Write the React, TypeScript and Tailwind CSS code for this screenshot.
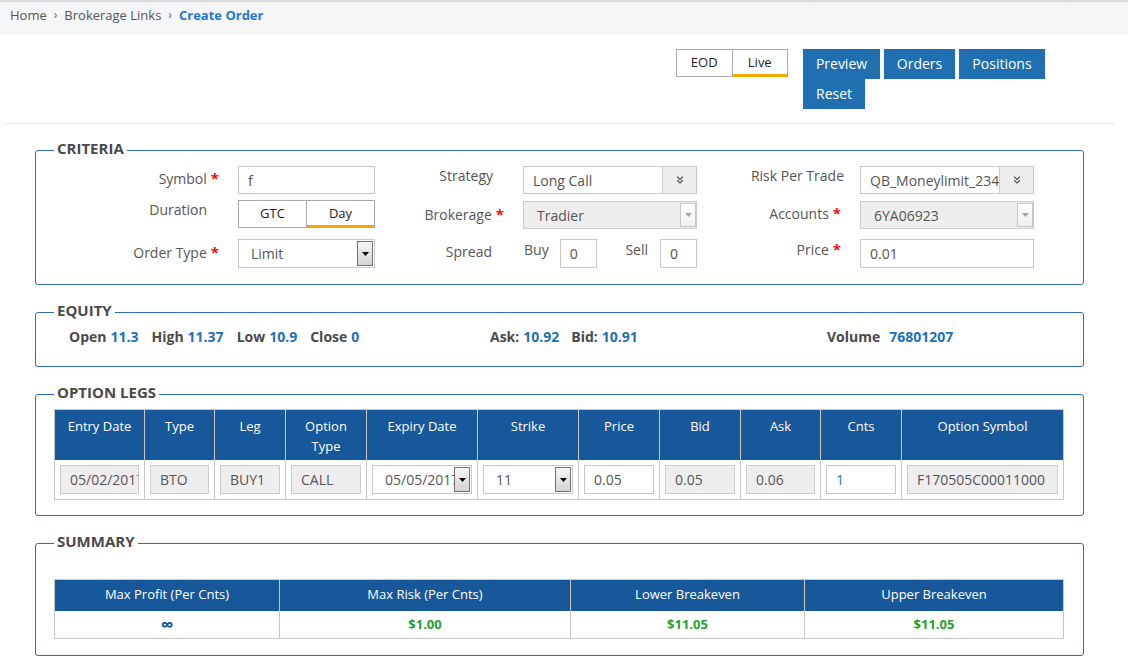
import { ChevronsDown } from "lucide-react";
import clsx from "clsx";
import type { ReactNode } from "react";

const ticks = [45, 44, 58, 59, 59, 62, 59, 61, 69, 235, 60, 53, 60, 143];

function Caret({ color = "#000" }: { color?: string }) {
  return (
    <svg width="7" height="4" viewBox="0 0 7 4">
      <path d="M0 0h7L3.5 4z" fill={color} />
    </svg>
  );
}

function Req() {
  return <span className="ml-[4px] text-[15px] font-bold text-[#e8140c]">*</span>;
}

function Label({ children, req, className }: { children: ReactNode; req?: boolean; className?: string }) {
  return (
    <div className={clsx("text-right text-[14px] leading-[20px] text-[#555]", className)}>
      {children}
      {req && <Req />}
    </div>
  );
}

function Box({
  value,
  disabled,
  className,
  textClass = "text-[#555]",
}: {
  value: string;
  disabled?: boolean;
  className?: string;
  textClass?: string;
}) {
  return (
    <div
      className={clsx(
        "flex items-center overflow-hidden whitespace-nowrap border pl-[9px] text-[14px]",
        disabled ? "border-[#ccc] bg-[#eee]" : "border-[#c8c8c8] bg-white",
        textClass,
        className,
      )}
    >
      {value}
    </div>
  );
}

function ChevSelect({ value }: { value: string }) {
  return (
    <div className="flex h-[28px] w-[174px] border border-[#c8c8c8] bg-white text-[14px] text-[#555]">
      <div className="flex min-w-0 flex-1 items-center overflow-hidden whitespace-nowrap pl-[9px]">{value}</div>
      <div className="flex w-[34px] shrink-0 items-center justify-center border-l border-[#ccc] bg-[#eee]">
        <ChevronsDown size={12} strokeWidth={2.25} className="text-[#555]" />
      </div>
    </div>
  );
}

function DisSelect({ value }: { value: string }) {
  return (
    <div className="mt-px flex h-[28px] w-[174px] border border-[#ccc] bg-[#eee] text-[14px] text-[#555]">
      <div className="flex flex-1 items-center pl-[13px]">{value}</div>
      <div className="my-px flex w-[16px] items-center justify-center border border-[#c6c6c6] bg-linear-to-b from-white to-[#f0f0f0]">
        <Caret color="#a5a5a5" />
      </div>
    </div>
  );
}

function ClassicSelect({ value, className }: { value: string; className?: string }) {
  return (
    <div className={clsx("flex border border-[#c8c8c8] bg-white text-[14px] text-[#555]", className)}>
      <div className="flex min-w-0 flex-1 items-center overflow-hidden whitespace-nowrap pl-[12px]">{value}</div>
      <div className="my-px mr-px flex w-[16px] shrink-0 items-center justify-center border border-[#707070] bg-linear-to-b from-[#f6f6f6] to-[#d4d4d4]">
        <Caret />
      </div>
    </div>
  );
}

function Toggle({ left, right, className }: { left: string; right: string; className?: string }) {
  return (
    <div className={clsx("flex h-[28px] border-x border-t border-[#aaa] text-[13px] text-[#222]", className)}>
      <div className="flex flex-1 items-center justify-center border-r border-b border-[#aaa]">{left}</div>
      <div className="flex flex-1 items-center justify-center border-b-[3px] border-[#f5a800] pt-[2px]">{right}</div>
    </div>
  );
}

function Section({ title, className, children }: { title: string; className?: string; children: ReactNode }) {
  return (
    <fieldset className={clsx("ml-[35px] w-[1049px] rounded-[3px] border border-[#2e6db4]", className)}>
      <legend className="ml-[18px] px-[3px] pb-[4px] text-[15px] font-bold leading-[20px] text-[#4a4a4a]">{title}</legend>
      {children}
    </fieldset>
  );
}

function Stat({ label, value, gap = "" }: { label: string; value: string; gap?: string }) {
  return (
    <span className="text-[#4a4a4a]">
      {label}
      <span className={clsx("text-[#2071b6]", gap || "ml-[4px]")}>{value}</span>
    </span>
  );
}

const legCols = "grid-cols-[90px_70px_71px_81px_111px_101px_81px_81px_80px_81px_162px]";
const legHeads: ReactNode[] = [
  "Entry Date",
  "Type",
  "Leg",
  <>
    Option
    <br />
    Type
  </>,
  "Expiry Date",
  "Strike",
  "Price",
  "Bid",
  "Ask",
  "Cnts",
  "Option Symbol",
];

const sumCols = "grid-cols-[225px_291px_234px_259px]";
const sumHeads = ["Max Profit (Per Cnts)", "Max Risk (Per Cnts)", "Lower Breakeven", "Upper Breakeven"];

export default function App() {
  return (
    <div className="h-[666px] w-[1128px] overflow-hidden bg-white font-['Open_Sans',sans-serif]">
      {/* breadcrumb */}
      <div className="h-[34px] bg-[#f5f6f8]">
        <div className="flex h-[3px] border-t-2 border-[#d9dadc]">
          {ticks.map((w, i) => (
            <div key={i} className="border-r border-[#d9dadc]" style={{ width: w }} />
          ))}
        </div>
        <div className="flex items-center gap-[7px] pt-[2px] pl-[10px] text-[13px] leading-[20px] text-[#555]">
          <span>Home</span>
          <span className="text-[12px] text-[#666]">›</span>
          <span>Brokerage Links</span>
          <span className="text-[12px] text-[#666]">›</span>
          <span className="font-bold text-[#1f78d6]">Create Order</span>
        </div>
      </div>

      {/* toolbar */}
      <div className="mt-[15px] flex items-start justify-end pr-[83px]">
        <Toggle left="EOD" right="Live" className="w-[112px]" />
        <div className="ml-[15px] flex w-[242px] flex-wrap gap-x-[4px] text-[14px] text-white">
          <button className="h-[30px] w-[77px] bg-[#2070b1] pb-[2px]">Preview</button>
          <button className="h-[30px] w-[71px] bg-[#2070b1] pb-[2px]">Orders</button>
          <button className="h-[30px] w-[86px] bg-[#2070b1] pb-[2px]">Positions</button>
          <button className="h-[30px] w-[62px] bg-[#2070b1] pb-[2px]">Reset</button>
        </div>
      </div>
      <div className="mt-[14px] ml-[5px] h-px w-[1109px] bg-[#e3e3e3]" />

      {/* criteria */}
      <Section title="CRITERIA" className="mt-[14px]">
        <div className="pt-[4px] pb-[16px]">
          <div className="grid h-[28px] grid-cols-[202px_137px_148px_174px_163px_174px]">
            <Label req className="pt-[2px] pr-[19px]">Symbol</Label>
            <Box value="f" className="h-[28px]" />
            <Label className="pr-[30px]">Strategy</Label>
            <ChevSelect value="Long Call" />
            <Label className="pr-[16px]">Risk Per Trade</Label>
            <ChevSelect value="QB_Moneylimit_2345" />
          </div>
          <div className="mt-[6px] grid h-[29px] grid-cols-[202px_137px_148px_174px_163px_174px]">
            <Label className="pr-[31px]">Duration</Label>
            <Toggle left="GTC" right="Day" />
            <Label req className="pt-[4px] pr-[19px]">Brokerage</Label>
            <DisSelect value="Tradier" />
            <Label req className="pt-[3px] pr-[19px]">Accounts</Label>
            <DisSelect value="6YA06923" />
          </div>
          <div className="mt-[10px] grid h-[29px] grid-cols-[202px_137px_148px_174px_163px_174px]">
            <Label req className="pt-[3px] pr-[19px]">Order Type</Label>
            <ClassicSelect value="Limit" className="h-[29px]" />
            <Label className="pt-[3px] pr-[31px]">Spread</Label>
            <div className="flex text-[14px] leading-[20px] text-[#555]">
              <span className="pt-px pl-px">Buy</span>
              <Box value="0" className="ml-[11px] h-[29px] w-[37px]" />
              <div className="ml-auto flex gap-[12px]">
                <span className="pt-px">Sell</span>
                <Box value="0" className="h-[29px] w-[37px]" />
              </div>
            </div>
            <Label req className="pr-[19px]">Price</Label>
            <Box value="0.01" className="h-[29px]" />
          </div>
        </div>
      </Section>

      {/* equity */}
      <Section title="EQUITY" className="mt-[15px]">
        <div className="flex pt-[3px] pb-[19px] pl-[33px] text-[14px] font-bold leading-[20px]">
          <div className="flex w-[421px] gap-[13px]">
            <Stat label="Open" value="11.3" />
            <Stat label="High" value="11.37" />
            <Stat label="Low" value="10.9" />
            <Stat label="Close" value="0" />
          </div>
          <div className="flex w-[337px] gap-[12px]">
            <Stat label="Ask:" value="10.92" />
            <Stat label="Bid:" value="10.91" />
          </div>
          <Stat label="Volume" value="76801207" gap="ml-[9px]" />
        </div>
      </Section>

      {/* option legs */}
      <Section title="OPTION LEGS" className="mt-[15px]">
        <div className="mt-[3px] mb-[15px] ml-[18px] w-[1010px] border-t border-l border-b border-[#c8c8c8]">
          <div className={clsx("grid", legCols)}>
            {legHeads.map((h, i) => (
              <div
                key={i}
                className="border-r border-[#c8c8c8] bg-[#17589a] pt-[6px] pb-[4px] text-center text-[13px] leading-[20px] text-white"
              >
                {h}
              </div>
            ))}
          </div>
          <div className={clsx("grid", legCols)}>
            {[
              <Box value="05/02/2017" disabled className="h-[29px]" />,
              <Box value="BTO" disabled className="h-[29px]" />,
              <Box value="BUY1" disabled className="h-[29px]" />,
              <Box value="CALL" disabled className="h-[29px]" />,
              <ClassicSelect value="05/05/2017" className="h-[29px]" />,
              <ClassicSelect value="11" className="h-[29px]" />,
              <Box value="0.05" className="h-[29px]" />,
              <Box value="0.05" disabled className="h-[29px]" />,
              <Box value="0.06" disabled className="h-[29px]" />,
              <Box value="1" className="h-[29px]" textClass="text-[#2a73c0]" />,
              <Box value="F170505C00011000" disabled className="h-[29px]" />,
            ].map((c, i) => (
              <div key={i} className="border-r border-[#c8c8c8] bg-white p-[5px]">
                {c}
              </div>
            ))}
          </div>
        </div>
      </Section>

      {/* summary */}
      <Section title="SUMMARY" className="mt-[15px]">
        <div className="mt-[24px] mb-[16px] ml-[18px] w-[1010px] border-t border-l border-b border-[#c8c8c8]">
          <div className={clsx("grid", sumCols)}>
            {sumHeads.map((h) => (
              <div
                key={h}
                className="flex h-[31px] items-center justify-center border-r border-[#c8c8c8] bg-[#17589a] pb-[1px] text-[13px] text-white"
              >
                {h}
              </div>
            ))}
          </div>
          <div className={clsx("grid h-[27px] text-[13px] font-bold", sumCols)}>
            <div className="flex items-center justify-center border-r border-[#c8c8c8] text-[18px] text-[#17589a]">∞</div>
            <div className="flex items-center justify-center border-r border-[#c8c8c8] text-[#22a22c]">$1.00</div>
            <div className="flex items-center justify-center border-r border-[#c8c8c8] text-[#22a22c]">$11.05</div>
            <div className="flex items-center justify-center border-r border-[#c8c8c8] text-[#22a22c]">$11.05</div>
          </div>
        </div>
      </Section>
    </div>
  );
}
